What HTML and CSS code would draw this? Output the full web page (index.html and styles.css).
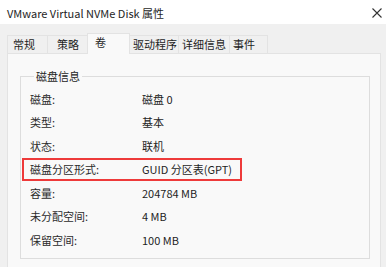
FILE: index.html
```html
<!DOCTYPE html>
<html lang="zh-CN">
<head>
    <meta charset="UTF-8">
    <title>VMware Virtual NVMe Disk 属性</title>
    <link rel="stylesheet" href="styles.css">
</head>
<body>
    <div class="titlebar">
        <span class="title">VMware Virtual NVMe Disk 属性</span>
        <svg class="close" width="10" height="10" viewBox="0 0 10 10">
            <path d="M0.5 0.5 L9.5 9.5 M9.5 0.5 L0.5 9.5" stroke="#333" stroke-width="1.1" fill="none"/>
        </svg>
    </div>
    <div class="content">
        <div class="tabs">
            <div class="tab w1">常规</div>
            <div class="tab w2">策略</div>
            <div class="tab active">卷</div>
            <div class="tab w4">驱动程序</div>
            <div class="tab w5">详细信息</div>
            <div class="tab w6">事件</div>
        </div>
        <div class="panel">
            <fieldset class="group">
                <legend>磁盘信息</legend>
                <div class="row"><span class="key">磁盘:</span><span>磁盘 0</span></div>
                <div class="row"><span class="key">类型:</span><span>基本</span></div>
                <div class="row"><span class="key">状态:</span><span>联机</span></div>
                <div class="row marked"><span class="key">磁盘分区形式:</span><span>GUID 分区表(GPT)</span></div>
                <div class="row"><span class="key">容量:</span><span>204784 MB</span></div>
                <div class="row"><span class="key">未分配空间:</span><span>4 MB</span></div>
                <div class="row"><span class="key">保留空间:</span><span>100 MB</span></div>
            </fieldset>
        </div>
    </div>
</body>
</html>
```

FILE: styles.css
```css
body {
    margin: 0;
    height: 267px;
    overflow: hidden;
    background: #f0f0f0;
    font-family: "Noto Sans CJK SC", "Noto Sans", sans-serif;
    font-size: 11px;
    color: #1e1e1e;
    white-space: nowrap;
}
.titlebar {
    height: 24px;
    background: #ffffff;
    display: flex;
    align-items: center;
    justify-content: space-between;
    padding: 0 4px 0 7px;
}
.title {
    font-size: 11px;
    line-height: 16px;
    padding-top: 2px;
}
.close {
    margin-top: 1px;
}
.content {
    padding: 9px 5px 0 7px;
}
.tabs {
    display: flex;
    align-items: flex-end;
    height: 20px;
}
.tab {
    box-sizing: border-box;
    height: 18px;
    line-height: 17px;
    padding-left: 5px;
    border: 1px solid #e3e3e3;
    border-bottom: none;
    border-right: none;
    background: #f0f0f0;
}
.w1 { width: 40px; }
.w2 { width: 40px; padding-left: 9px; }
.w4 { width: 48px; padding-left: 3px; }
.w5 { width: 51px; padding-left: 3px; }
.w6 { width: 39px; padding-left: 3px; border-right: 1px solid #e3e3e3; }
.tab.active {
    width: 43px;
    height: 21px;
    margin-bottom: -1px;
    position: relative;
    line-height: 16px;
    padding-left: 7px;
    background: #f9f9f9;
    border-color: #e3e3e3;
    border-right: 1px solid #e3e3e3;
}
.tab.active + .tab {
    border-left: none;
}
.panel {
    height: 199px;
    background: #f9f9f9;
    border: 1px solid #e3e3e3;
    padding: 14px 10px 0 12px;
}
.group {
    margin: 0;
    padding: 3px 0 6px 9px;
    border: 1px solid #dddddd;
}
.group legend {
    padding: 0 2px;
    margin-left: 4px;
    line-height: 16px;
}
.row {
    display: flex;
    height: 23.5px;
    align-items: center;
}
.key {
    width: 112px;
    color: #2b2b2b;
}
.row.marked {
    box-sizing: border-box;
    width: 220px;
    margin-left: -8px;
    padding-left: 6px;
    border: 2px solid #ee3a3a;
}
```
